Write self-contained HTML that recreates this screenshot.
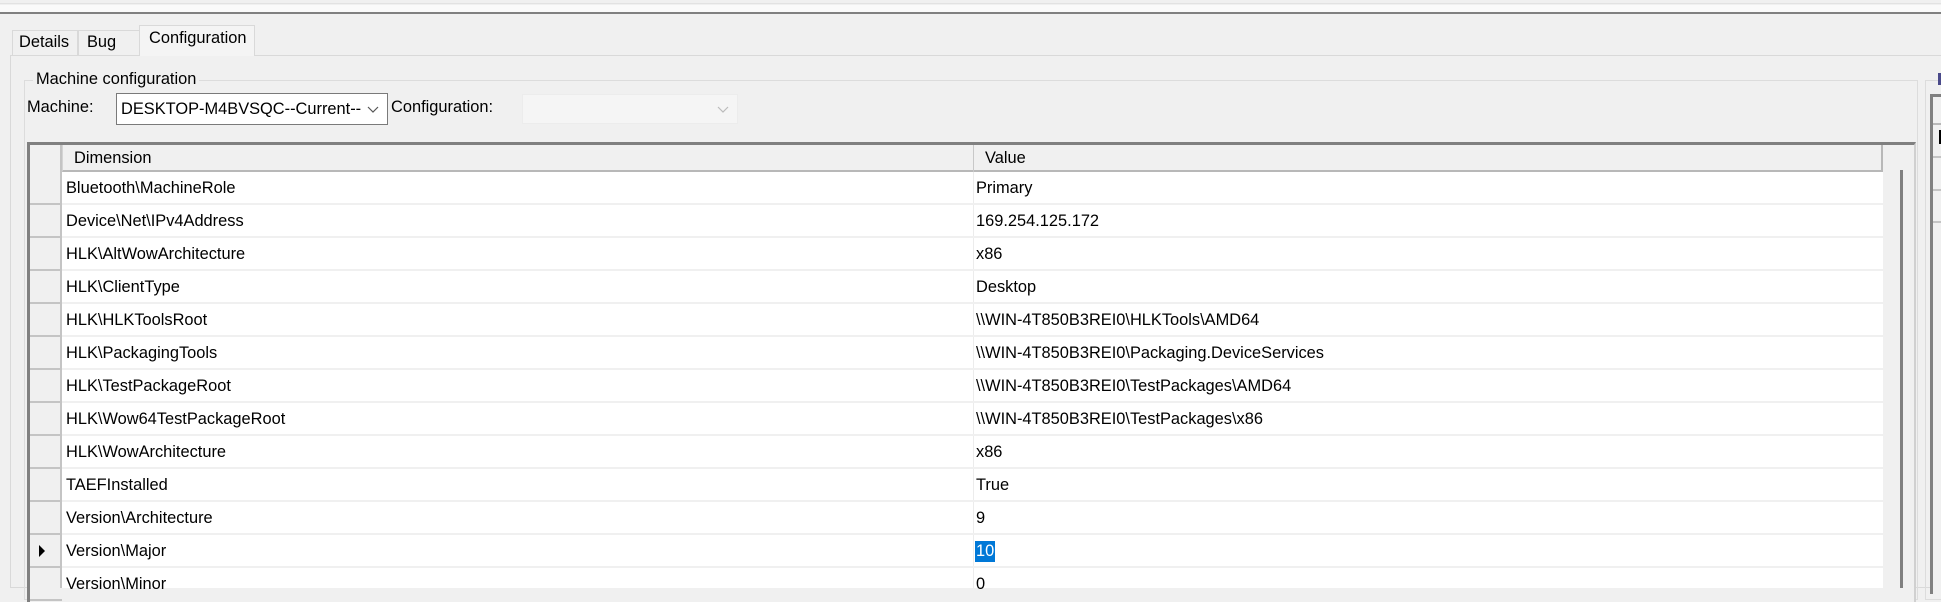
<!DOCTYPE html>
<html><head><meta charset="utf-8"><style>
*{box-sizing:border-box;margin:0;padding:0}
body{width:1941px;height:588px;background:#f0f0f0;font-family:"Liberation Sans",sans-serif;font-size:16.4px;color:#000;position:relative;overflow:hidden}
.a{position:absolute}
.t{position:absolute;white-space:nowrap}
</style></head><body>
<div class="a" style="left:0;top:0;width:1941px;height:4px;background:#f0f0f0;border-bottom:1px solid #e2e2e2"></div>
<div class="a" style="left:0;top:5px;width:1941px;height:7px;background:#fafafa"></div>
<div class="a" style="left:0;top:12px;width:1941px;height:2px;background:#808080"></div>
<!-- tabs -->
<div class="a" style="left:12px;top:30px;width:66px;height:25px;border:1px solid #d9d9d9;border-bottom:none;background:#f0f0f0"></div>
<div class="t" style="left:19px;top:33px">Details</div>
<div class="a" style="left:78px;top:30px;width:62px;height:25px;border:1px solid #d9d9d9;border-bottom:none;background:#f0f0f0"></div>
<div class="t" style="left:87px;top:33px">Bug</div>
<div class="a" style="left:10px;top:55px;width:1931px;height:533px;border:1px solid #d9d9d9;border-right:none;background:#f0f0f0"></div>
<div class="a" style="left:139px;top:25px;width:116px;height:31px;border:1px solid #d9d9d9;border-bottom:none;background:#f4f4f4"></div>
<div class="t" style="left:149px;top:29px">Configuration</div>
<!-- groupbox -->
<div class="a" style="left:24px;top:80px;width:1894px;height:520px;border:1px solid #dcdcdc"></div>
<div class="t" style="left:33px;top:70px;background:#f0f0f0;padding:0 3px">Machine configuration</div>
<div class="t" style="left:27px;top:98px">Machine:</div>
<div class="a" style="left:116px;top:93px;width:272px;height:32px;border:1px solid #7a7a7a;background:#fff"></div>
<div class="t" style="left:121px;top:100px">DESKTOP-M4BVSQC--Current--</div>
<svg class="a" style="left:366px;top:104px" width="14" height="10"><path d="M2 3 L7 8 L12 3" fill="none" stroke="#555" stroke-width="1.2"/></svg>
<div class="t" style="left:391px;top:98px">Configuration:</div>
<div class="a" style="left:522px;top:94px;width:216px;height:30px;background:#f5f5f5;border:1px solid #ececec"></div>
<svg class="a" style="left:716px;top:104px" width="14" height="10"><path d="M2 3 L7 8 L12 3" fill="none" stroke="#bbb" stroke-width="1.2"/></svg>
<!-- grid -->
<div class="a" style="left:27px;top:142px;width:1889px;height:460px;border-left:3px solid #808080;border-top:3px solid #808080;border-right:2px solid #d0d0d0;background:#f0f0f0"></div>
<div class="a" style="left:62px;top:145px;width:1821px;height:27px;border-bottom:2px solid #b8b8b8;border-left:1px solid #d4d4d4;border-right:2px solid #b8b8b8;background:#f0f0f0"></div>
<div class="a" style="left:973px;top:145px;width:1px;height:27px;background:#c8c8c8"></div>
<div class="t" style="left:74px;top:149px">Dimension</div>
<div class="t" style="left:985px;top:149px">Value</div>
<div class="a" style="left:30px;top:145px;width:32px;height:443px;border-right:2px solid #c4c4c4"></div>
<div class="a" style="left:1900px;top:170px;width:3px;height:418px;background:#808080"></div>
<div class="a" style="left:62px;top:172px;width:1821px;height:416px;background:#fff"></div>
<div class="a" style="left:973px;top:172px;width:1px;height:416px;background:#ececec"></div>
<div id="rows"></div>
<script>
var d=[["Bluetooth\\MachineRole","Primary"],["Device\\Net\\IPv4Address","169.254.125.172"],["HLK\\AltWowArchitecture","x86"],["HLK\\ClientType","Desktop"],["HLK\\HLKToolsRoot","\\\\WIN-4T850B3REI0\\HLKTools\\AMD64"],["HLK\\PackagingTools","\\\\WIN-4T850B3REI0\\Packaging.DeviceServices"],["HLK\\TestPackageRoot","\\\\WIN-4T850B3REI0\\TestPackages\\AMD64"],["HLK\\Wow64TestPackageRoot","\\\\WIN-4T850B3REI0\\TestPackages\\x86"],["HLK\\WowArchitecture","x86"],["TAEFInstalled","True"],["Version\\Architecture","9"],["Version\\Major","10"],["Version\\Minor","0"]];
var h="";
for(var i=0;i<d.length;i++){var y=172+i*33;
h+='<div class="a" style="left:62px;top:'+(y+31)+'px;width:1821px;height:2px;background:#f0f0f0"></div>';
h+='<div class="a" style="left:30px;top:'+(y+31)+'px;width:32px;height:2px;background:#c4c4c4"></div>';
h+='<div class="t" style="left:66px;top:'+(y+7)+'px">'+d[i][0]+'</div>';
if(i==11){h+='<div class="t" style="left:975px;top:'+(y+6)+'px;background:#0078d7;color:#fff;padding:1px 1px">10</div>';
h+='<svg class="a" style="left:38px;top:'+(y+10)+'px" width="8" height="12"><path d="M1 0 L7 6 L1 12Z" fill="#000"/></svg>';}
else h+='<div class="t" style="left:976px;top:'+(y+7)+'px">'+d[i][1]+'</div>';}
document.getElementById('rows').innerHTML=h;
</script>
<!-- right panel -->
<div class="a" style="left:1925px;top:80px;width:20px;height:520px;border:1px solid #dcdcdc"></div>
<div class="a" style="left:1938px;top:73px;width:3px;height:12px;background:#4a4a8a"></div>
<div class="a" style="left:1930px;top:94px;width:12px;height:500px;border-left:3px solid #808080;border-top:3px solid #808080;background:#f0f0f0"></div>
<div class="a" style="left:1933px;top:123px;width:10px;height:2px;background:#b8b8b8"></div>
<div class="a" style="left:1933px;top:156px;width:10px;height:2px;background:#c4c4c4"></div>
<div class="a" style="left:1933px;top:189px;width:10px;height:2px;background:#c4c4c4"></div>
<div class="a" style="left:1933px;top:221px;width:10px;height:2px;background:#c4c4c4"></div>
<div class="a" style="left:1939px;top:130px;width:2px;height:14px;background:#000"></div>
</body></html>
